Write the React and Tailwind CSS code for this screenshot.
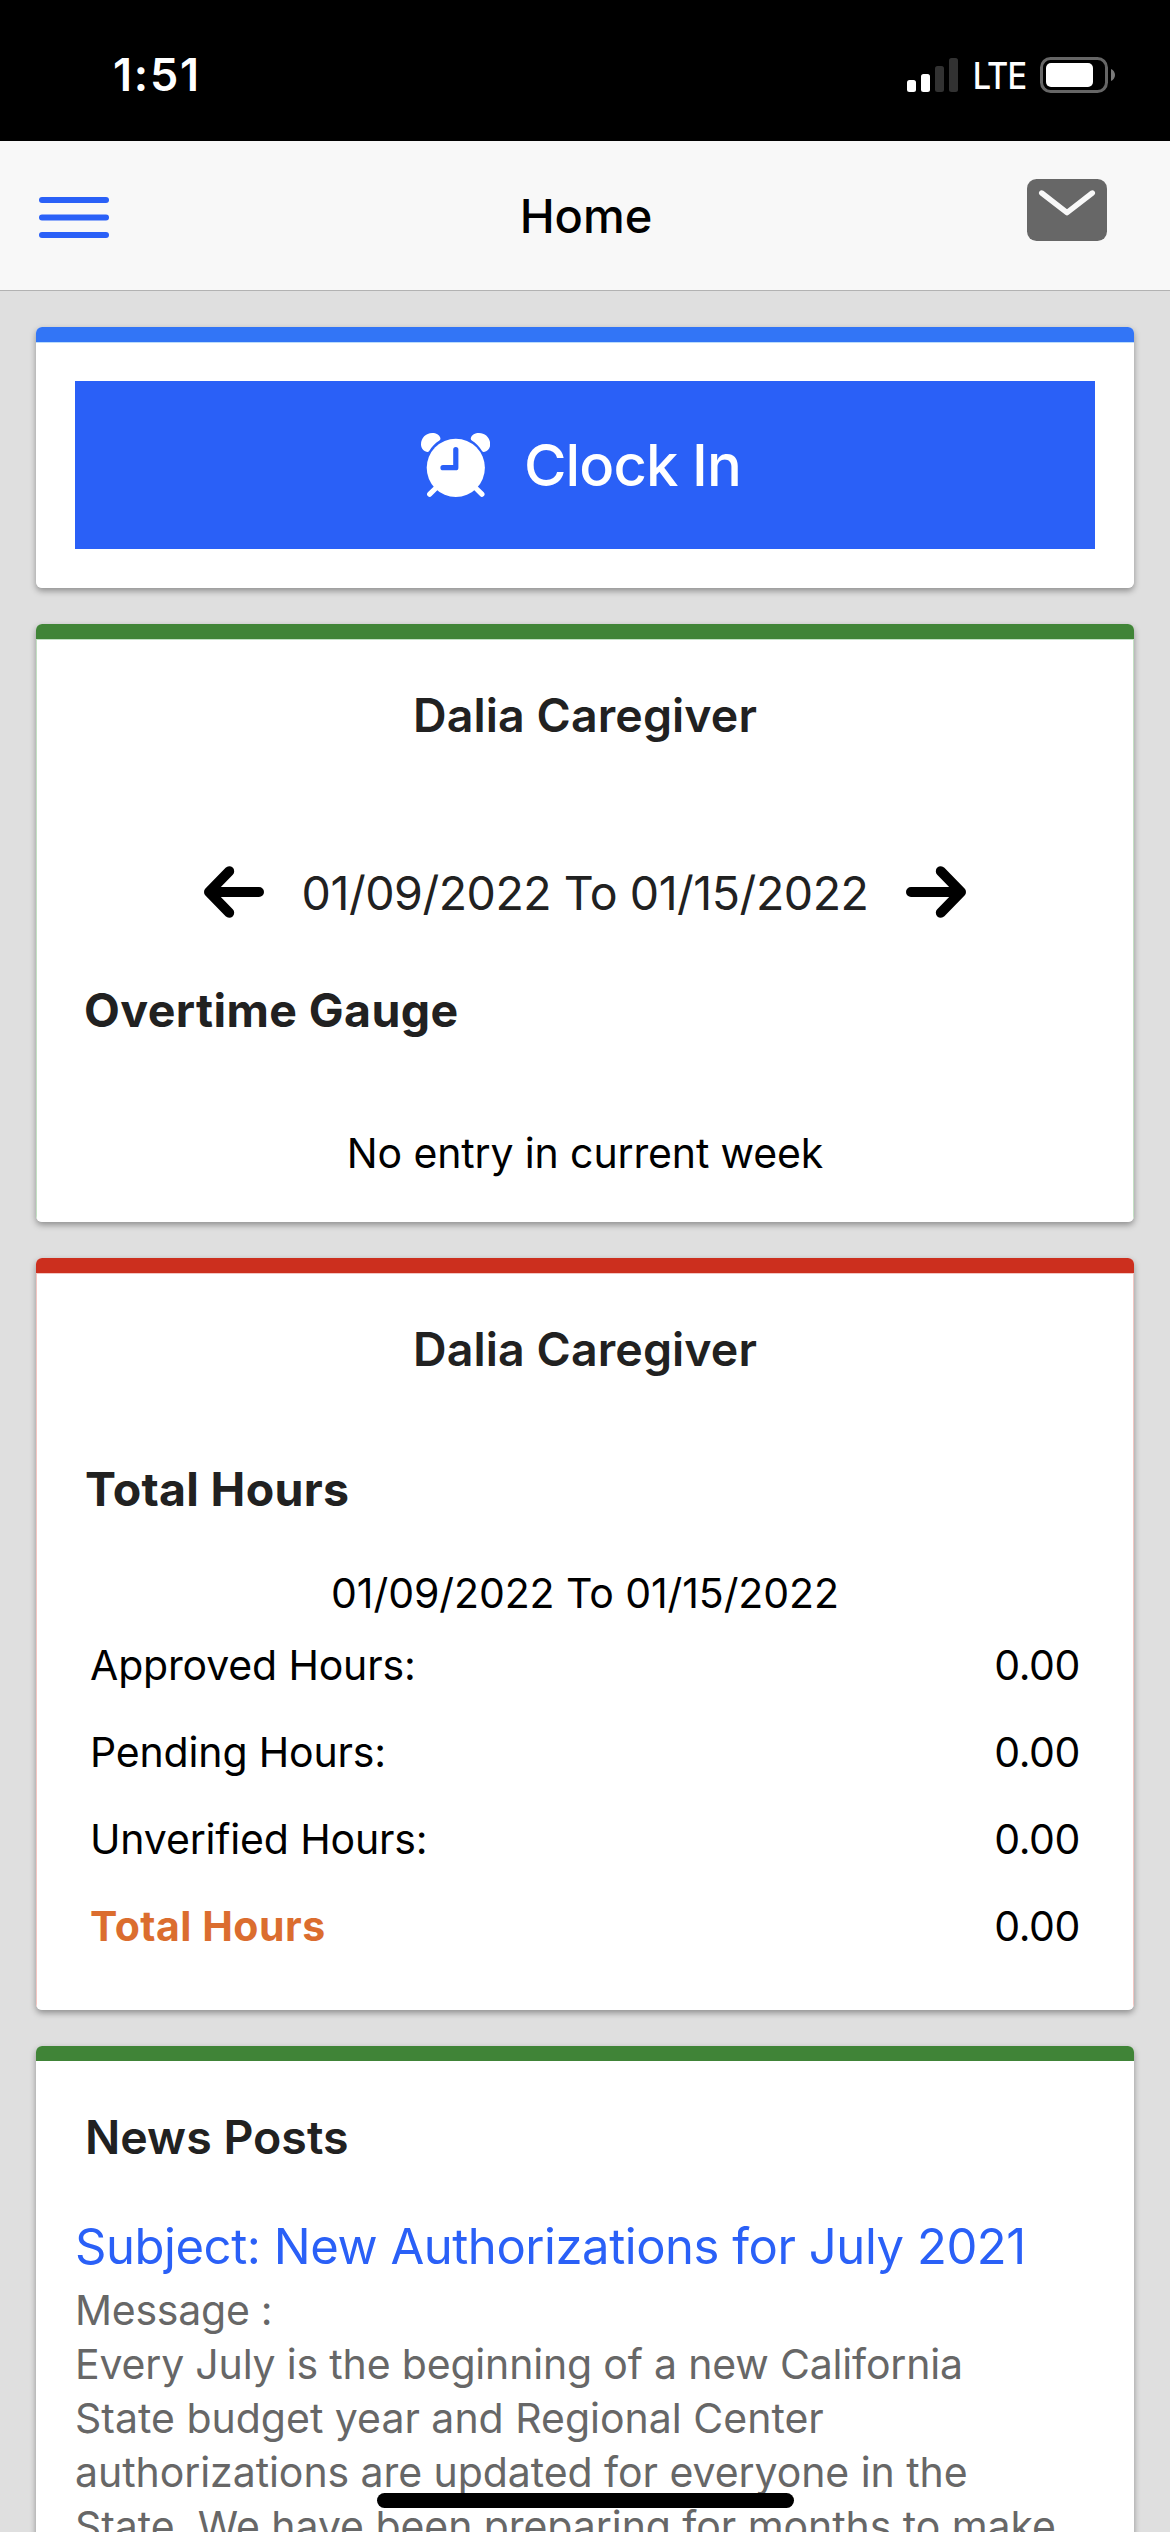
import React from "react";

function SignalIcon() {
  return (
    <svg width="51" height="34" viewBox="0 0 51 34">
      <rect x="0" y="22" width="9" height="12" rx="2.5" fill="#fff" />
      <rect x="14" y="16" width="9" height="18" rx="2.5" fill="#fff" />
      <rect x="28" y="8" width="9" height="26" rx="2.5" fill="#323232" />
      <rect x="42" y="0" width="9" height="34" rx="2.5" fill="#323232" />
    </svg>
  );
}

function BatteryIcon() {
  return (
    <svg width="75" height="36" viewBox="0 0 75 36">
      <rect x="1.5" y="1.5" width="65" height="33" rx="9" fill="none" stroke="#666" strokeWidth="3" />
      <rect x="6" y="6" width="47" height="24" rx="5" fill="#fff" />
      <path d="M71 12 C73.6 13.2 75 15.5 75 18 C75 20.5 73.6 22.8 71 24 Z" fill="#7a7a7a" />
    </svg>
  );
}

function MenuIcon() {
  return (
    <svg width="70" height="41" viewBox="0 0 70 41" fill="#2a60f7">
      <rect x="0" y="0" width="70" height="6" rx="3" />
      <rect x="0" y="17.5" width="70" height="6" rx="3" />
      <rect x="0" y="35" width="70" height="6" rx="3" />
    </svg>
  );
}

function MailIcon() {
  return (
    <svg width="80" height="62" viewBox="0 0 80 62">
      <rect width="80" height="62" rx="9.5" fill="#676767" />
      <path d="M14.7 14 L40 33.7 L65.3 14" fill="none" stroke="#f8f8f8" strokeWidth="5.4" strokeLinecap="round" strokeLinejoin="round" />
    </svg>
  );
}

function AlarmIcon() {
  const bell =
    "M6.2 19 C2.4 18.2 0 15.4 0 11.3 C0 5 4.8 0 11.2 0 C15.2 0 18.4 2 19.3 4.8 C19.7 6.2 19.2 6.9 18.4 7.5 C14.3 10.2 11 13.2 8.2 17.9 C7.6 18.8 7 19.1 6.2 19 Z";
  return (
    <svg width="69" height="64" viewBox="0 0 69 64">
      <path d={bell} fill="#fff" />
      <path d={bell} fill="#fff" transform="translate(69.2 0) scale(-1 1)" />
      <circle cx="34.8" cy="34.8" r="29.1" fill="#fff" />
      <path d="M8.7 61.2 L16 54 M60.9 61.2 L53.6 54" stroke="#fff" strokeWidth="5.2" strokeLinecap="round" />
      <path d="M34.8 16.6 V34.7 H22" fill="none" stroke="#2a60f7" strokeWidth="5.2" strokeLinecap="round" strokeLinejoin="round" />
    </svg>
  );
}

function ArrowIcon({ flip }) {
  return (
    <svg width="60" height="54" viewBox="0 0 60 54" className={flip ? "mb-[2px] -scale-x-100" : "mb-[2px]"}>
      <path d="M25.2 6.2 L5 27 L25.2 47.8 M6 27 H55" fill="none" stroke="#000" strokeWidth="10" strokeLinecap="round" strokeLinejoin="round" />
    </svg>
  );
}

function Card({ bar, body, children }) {
  return (
    <section className="rounded-[6px] shadow-[0_3px_6px_rgba(0,0,0,0.36)]">
      <div className="overflow-hidden rounded-[6px] bg-white">
        <div className={"h-[15px] " + bar} />
        <div className={body}>{children}</div>
      </div>
    </section>
  );
}

const hours = [
  { label: "Approved Hours:", value: "0.00" },
  { label: "Pending Hours:", value: "0.00" },
  { label: "Unverified Hours:", value: "0.00" },
];

export default function App() {
  return (
    <div className="relative flex h-[2532px] w-[1170px] flex-col overflow-hidden bg-[#dfdfdf] font-['Inter',sans-serif] whitespace-nowrap text-black">
      <div className="flex h-[141px] shrink-0 items-center justify-between bg-black pt-2 pr-[55px] pl-[113px] text-white">
        <span className="text-[45px] leading-none font-semibold tracking-[1.8px]">1:51</span>
        <div className="flex items-center">
          <SignalIcon />
          <div className="mt-[2px] flex w-[82px] justify-center">
            <span className="scale-x-[0.88] text-[37px] leading-none font-medium tracking-[-1px]">LTE</span>
          </div>
          <BatteryIcon />
        </div>
      </div>

      <header className="grid h-[150px] shrink-0 grid-cols-3 items-center border-b border-[#b2b2b2] bg-[#f8f8f8]">
        <div className="mt-1 pl-[39px]">
          <MenuIcon />
        </div>
        <h1 className="pl-[2px] text-center text-[47px] leading-none font-medium">Home</h1>
        <div className="mb-[11px] flex justify-end pr-[63px]">
          <MailIcon />
        </div>
      </header>

      <main className="flex flex-col gap-9 px-9 pt-9">
        <Card bar="bg-[#3275f6]" body="border-t border-[#bbdcfb] px-[39px] pt-[38px] pb-[39px]">
          <button className="flex h-[168px] w-full items-center justify-center gap-[34px] bg-[#2a60f7] pr-2 text-white">
            <AlarmIcon />
            <span className="text-[58px] leading-none font-medium tracking-[-0.9px]">Clock In</span>
          </button>
        </Card>

        <Card bar="bg-[#408437]" body="border-x border-t border-[#c3e0c3] pt-[47px] pb-[44px]">
          <h2 className="text-center text-[46.5px] leading-[56px] font-semibold tracking-[0.1px] text-[#212121]">Dalia Caregiver</h2>
          <div className="mt-[122px] flex items-center justify-center gap-[38px]">
            <ArrowIcon />
            <span className="text-[46.5px] leading-[56px] tracking-[-0.47px] text-[#212121]">01/09/2022 To 01/15/2022</span>
            <ArrowIcon flip />
          </div>
          <h3 className="mt-[61px] pl-[47px] text-[46.5px] leading-[56px] font-bold tracking-[0.4px] text-[#212121]">Overtime Gauge</h3>
          <p className="mt-[90px] text-center text-[41px] leading-[50px] tracking-[-0.13px]">No entry in current week</p>
        </Card>

        <Card bar="bg-[#cc2f1e]" body="border-x border-t border-[#f3c6c2] pt-[47px] pb-[40px]">
          <h2 className="text-center text-[46.5px] leading-[56px] font-semibold tracking-[0.1px] text-[#212121]">Dalia Caregiver</h2>
          <h3 className="mt-[84px] pl-[48px] text-[46.5px] leading-[56px] font-bold tracking-[0.3px] text-[#212121]">Total Hours</h3>
          <p className="mt-[51px] text-center text-[41px] leading-[50px] tracking-[-0.08px]">01/09/2022 To 01/15/2022</p>
          <dl className="mt-1 px-[53px] text-[41px] leading-[87px]">
            {hours.map((row) => (
              <div key={row.label} className="flex justify-between tracking-[-0.16px]">
                <dt>{row.label}</dt>
                <dd className="tracking-[-0.4px]">{row.value}</dd>
              </div>
            ))}
            <div className="flex justify-between">
              <dt className="font-bold tracking-[0.5px] text-[#db6d2f]">Total Hours</dt>
              <dd className="tracking-[-0.4px]">0.00</dd>
            </div>
          </dl>
        </Card>

        <Card bar="bg-[#408437]" body="pt-[48px] pb-[40px]">
          <h2 className="pl-[49px] text-[46.5px] leading-[56px] font-semibold text-[#212121]">News Posts</h2>
          <div className="pl-[39px]">
            <h3 className="mt-[53px] text-[49px] leading-[58px] tracking-[-0.45px] text-[#2a60f7]">Subject: New Authorizations for July 2021</h3>
            <div className="mt-[7px] text-[41px] leading-[54px] text-[#676767]">
              <p className="tracking-[-0.25px]">Message :</p>
              <p className="tracking-[-0.18px]">Every July is the beginning of a new California</p>
              <p>State budget year and Regional Center</p>
              <p className="tracking-[-0.06px]">authorizations are updated for everyone in the</p>
              <p className="tracking-[-0.06px]">State. We have been preparing for months to make</p>
            </div>
          </div>
        </Card>
      </main>

      <div className="absolute bottom-6 left-[377px] h-[15px] w-[417px] rounded-full bg-black" />
    </div>
  );
}
